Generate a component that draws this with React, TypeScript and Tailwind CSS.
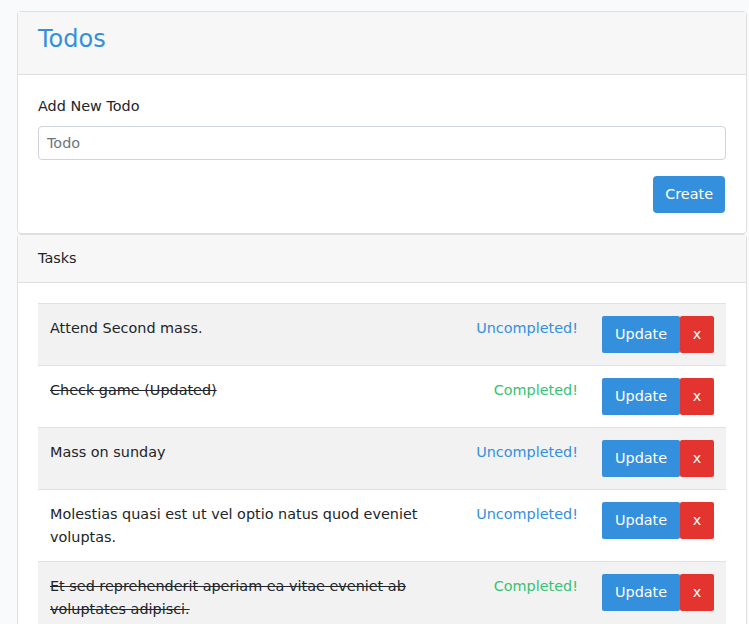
import React from "react";

type Todo = { title: string; completed: boolean };

const todos: Todo[] = [
  { title: "Attend Second mass.", completed: false },
  { title: "Check game (Updated)", completed: true },
  { title: "Mass on sunday", completed: false },
  { title: "Molestias quasi est ut vel optio natus quod eveniet voluptas.", completed: false },
  { title: "Et sed reprehenderit aperiam ea vitae eveniet ab voluptates adipisci.", completed: true },
  { title: "Quia ut ratione sint nisi aut.", completed: false },
];

function TodoRow({ todo, striped }: { todo: Todo; striped: boolean }) {
  return (
    <div
      className={`grid grid-cols-[420px_132px_136px] border-t border-[#dee2e6] ${
        striped ? "bg-[#f2f2f2]" : "bg-white"
      }`}
    >
      <div className="px-3 pb-3 pt-[13px]">
        <span className={todo.completed ? "line-through" : ""}>{todo.title}</span>
      </div>
      <div
        className={`px-3 pb-3 pt-[13px] text-right ${
          todo.completed ? "text-[#38c172]" : "text-[#3490dc]"
        }`}
      >
        {todo.completed ? "Completed!" : "Uncompleted!"}
      </div>
      <div className="flex items-start p-3">
        <button className="h-[37px] rounded-[2px] bg-[#3490dc] px-[13px] text-white">Update</button>
        <button className="h-[37px] rounded-[2px] bg-[#e3342f] px-[12.5px] text-white">x</button>
      </div>
    </div>
  );
}

export default function App() {
  return (
    <div className="min-h-screen bg-[#f8fafc] pt-[11px] font-['DejaVu_Sans',sans-serif] text-[14.4px] leading-[23.04px] text-[#212529]">
      <div className="ml-[17px] w-[730px]">
        <div className="rounded border border-[#dfdfdf] bg-white">
          <div className="border-b border-[#dfdfdf] bg-[#f7f7f7] px-5 pb-[12px] pt-[13px]">
            <h3 className="mb-2 text-[24px] leading-[29px] text-[#3490dc]">Todos</h3>
          </div>
          <div className="p-5">
            <label className="mb-2 block">Add New Todo</label>
            <input
              className="block h-[34px] w-full rounded border border-[#ced4da] px-2 placeholder:text-[#6c757d]"
              placeholder="Todo"
            />
            <div className="mt-4 flex justify-end">
              <button className="mr-px h-[37px] rounded bg-[#3490dc] px-3 text-white">Create</button>
            </div>
          </div>
        </div>

        <div className="rounded border border-[#dfdfdf] bg-white">
          <div className="border-b border-[#dfdfdf] bg-[#f7f7f7] px-5 py-3">Tasks</div>
          <div className="p-5">
            <div className="border-b border-[#dee2e6]">
              {todos.map((t, i) => (
                <TodoRow key={i} todo={t} striped={i % 2 === 0} />
              ))}
            </div>
          </div>
        </div>
      </div>
    </div>
  );
}
